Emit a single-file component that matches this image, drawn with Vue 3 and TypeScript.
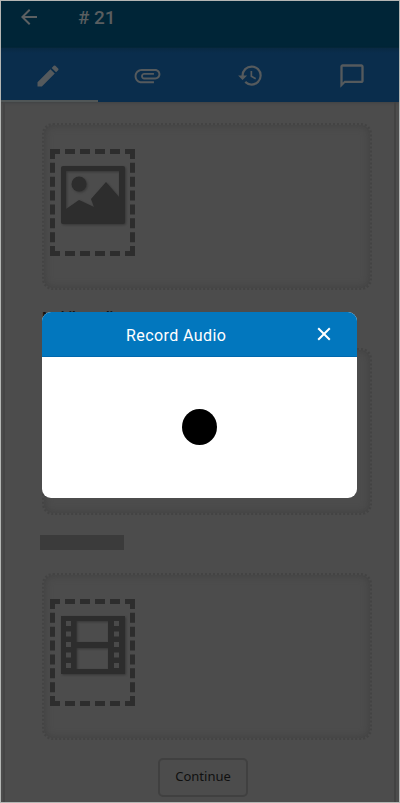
<script setup lang="ts">
import { ref } from 'vue'

const open = ref(true)
const perforations: number[] = [5, 15.5, 26, 36.5, 47]
</script>

<template>
  <div class="screen">
    <header class="bar">
      <svg class="back" viewBox="0 0 24 24"><path d="M20 11H7.83l5.59-5.59L12 4l-8 8 8 8 1.41-1.41L7.83 13H20z" /></svg>
      <h1># 21</h1>
    </header>
    <nav class="tabs">
      <button class="tab active" aria-label="Edit">
        <svg viewBox="0 0 24 24"><path d="M3 17.25V21h3.75L17.81 9.94l-3.75-3.75zM20.71 7.04a1 1 0 0 0 0-1.41l-2.34-2.34a1 1 0 0 0-1.41 0l-1.83 1.83 3.75 3.75z" /></svg>
      </button>
      <button class="tab" aria-label="Attachments">
        <svg class="clip" viewBox="0 0 24 24"><path d="M2 12.5C2 9.46 4.46 7 7.5 7H18c2.21 0 4 1.79 4 4s-1.79 4-4 4H9.5C8.12 15 7 13.88 7 12.5S8.12 10 9.5 10H17v1.5H9.41c-.55 0-.91.45-.91 1s.36 1 .91 1H18c1.38 0 2.5-1.12 2.5-2.5S19.38 8.5 18 8.5H7.5c-2.21 0-4 1.79-4 4s1.79 4 4 4H17V18H7.5C4.46 18 2 15.54 2 12.5z" /></svg>
      </button>
      <button class="tab" aria-label="History">
        <svg class="history" viewBox="0 0 24 24"><path d="M13 3a9 9 0 0 0-9 9H1l3.89 3.89.07.14L9 12H6c0-3.87 3.13-7 7-7s7 3.13 7 7-3.13 7-7 7c-1.93 0-3.68-.79-4.94-2.06l-1.42 1.42A8.954 8.954 0 0 0 13 21a9 9 0 0 0 0-18zm-1 5v5l4.28 2.54.72-1.21-3.5-2.08V8z" /></svg>
      </button>
      <button class="tab" aria-label="Comments">
        <svg viewBox="0 0 24 24"><path d="M20 2H4c-1.1 0-2 .9-2 2v18l4-4h14c1.1 0 2-.9 2-2V4c0-1.1-.9-2-2-2zm0 14H5.500L4 17.500V4h16z" /></svg>
      </button>
    </nav>
    <main class="form">
      <section class="card">
        <div class="drop">
          <svg class="media" viewBox="0 0 64 58">
            <path fill-rule="evenodd" d="M2 0H62Q64 0 64 2V56Q64 58 62 58H2Q0 58 0 56V2Q0 0 2 0zM5 5V43L18 34L33 41L30 33L45 16L58 31V5z" />
            <circle cx="18" cy="18" r="7.5" />
          </svg>
        </div>
      </section>
      <h2 class="label">Mobile Audio</h2>
      <section class="card"></section>
      <div class="redacted"></div>
      <section class="card">
        <div class="drop">
          <svg class="media" viewBox="0 0 64 58">
            <path fill-rule="evenodd" d="M0 0H64V58H0zM15.500 5V26H47V5zM15.500 32V53H47V32z" />
            <g class="holes">
              <template v-for="y in perforations" :key="y">
                <rect x="5" :y="y" width="5" height="5" />
                <rect x="53" :y="y" width="5" height="5" />
              </template>
            </g>
          </svg>
        </div>
      </section>
      <button class="continue">Continue</button>
    </main>
    <div v-if="open" class="dialog" role="dialog">
      <div class="dialog-head">
        <span class="title">Record Audio</span>
        <button class="close" aria-label="Close" @click="open = false">
          <svg viewBox="0 0 14 14"><path d="M1.200 1.200 12.800 12.800M12.800 1.200 1.200 12.800" /></svg>
        </button>
      </div>
      <div class="dialog-body"><button class="record" aria-label="Record"></button></div>
    </div>
  </div>
</template>

<style>
body { margin: 0; background: #4c4c4c; }
</style>

<style scoped>
* { box-sizing: border-box; }
button { border: 0; padding: 0; background: none; }
svg { display: block; }
.screen {
  position: relative;
  width: 400px;
  height: 803px;
  overflow: hidden;
  border: 1px solid #b4b6b4;
  background: #4c4c4c;
  font-family: Roboto, sans-serif;
}
.bar {
  height: 47px;
  display: flex;
  align-items: flex-start;
  padding: 4px 0 0 16px;
  background: #002537;
}
.back { width: 24px; height: 24px; fill: #5c6062; }
h1 {
  margin: 0 0 0 37px;
  font-size: 19px;
  line-height: 25px;
  font-weight: 500;
  letter-spacing: -.1px;
  color: #5a5e60;
}
.tabs {
  display: grid;
  grid-template-columns: 97px 99px 107px 95px;
  height: 54px;
  background: linear-gradient(#092943, #0a2d4c 5px);
  box-shadow: 0 1px 2px #404244;
}
.tab { display: flex; align-items: center; justify-content: center; border-bottom: 2px solid transparent; padding-top: 3px; }
.tab.active { border-color: #505657; padding-right: 3px; }
.tab svg { width: 28px; height: 28px; fill: #555a5d; }
.tab .clip { width: 31px; height: 31px; }
.tab .history { width: 27px; height: 27px; }
.form {
  display: flex;
  flex-direction: column;
  align-items: flex-start;
  height: 700px;
  margin: 0 3px 0 2px;
  padding: 21px 0 0 37px;
  border-left: 2px solid #444;
  border-right: 2px solid #424242;
}
.card {
  flex: none;
  width: 330px;
  height: 167px;
  padding: 24px 6px;
  border: 2px dotted #434343;
  border-radius: 11px;
  box-shadow: inset 0 0 7px 1px #424242;
}
.drop { width: 85px; height: 107px; border: 5px dashed #2d2d2d; padding: 12px 6px; }
.media { width: 64px; height: 58px; overflow: visible; fill: #2d2d2d; filter: drop-shadow(1px 1px 1px #363636); }
.holes { fill: #4a4a4a; }
.label {
  flex: none;
  height: 39px;
  margin: 19px 0 0;
  font: 700 12px/16px "Noto Sans", sans-serif;
  color: #111;
}
.redacted { flex: none; width: 84px; height: 15px; margin: 20px 0 23px -2px; background: #3b3b3b; }
.continue {
  flex: none;
  width: 90px;
  height: 39px;
  margin: 18px 0 0 116px;
  border: 2px solid #404040;
  border-radius: 5px;
  font: 13px "Noto Sans", sans-serif;
  color: #101010;
  padding-bottom: 3px;
}
.dialog {
  position: absolute;
  left: 41px;
  top: 311px;
  width: 315px;
  height: 186px;
  border-radius: 9px;
  overflow: hidden;
  background: #fff;
}
.dialog-head {
  display: flex;
  align-items: center;
  height: 45px;
  padding-left: 84px;
  background: #0277be;
  border-bottom: 1px solid #0068ad;
  color: #fff;
}
.title { width: 191px; font-size: 16px; line-height: 20px; letter-spacing: .42px; padding-top: 4px; }
.close svg { width: 14px; height: 14px; fill: none; stroke: #fff; stroke-width: 2; }
.dialog-body { height: 141px; display: flex; justify-content: center; padding-top: 52px; }
.record { width: 35px; height: 36px; border-radius: 50%; background: #000; }
</style>
